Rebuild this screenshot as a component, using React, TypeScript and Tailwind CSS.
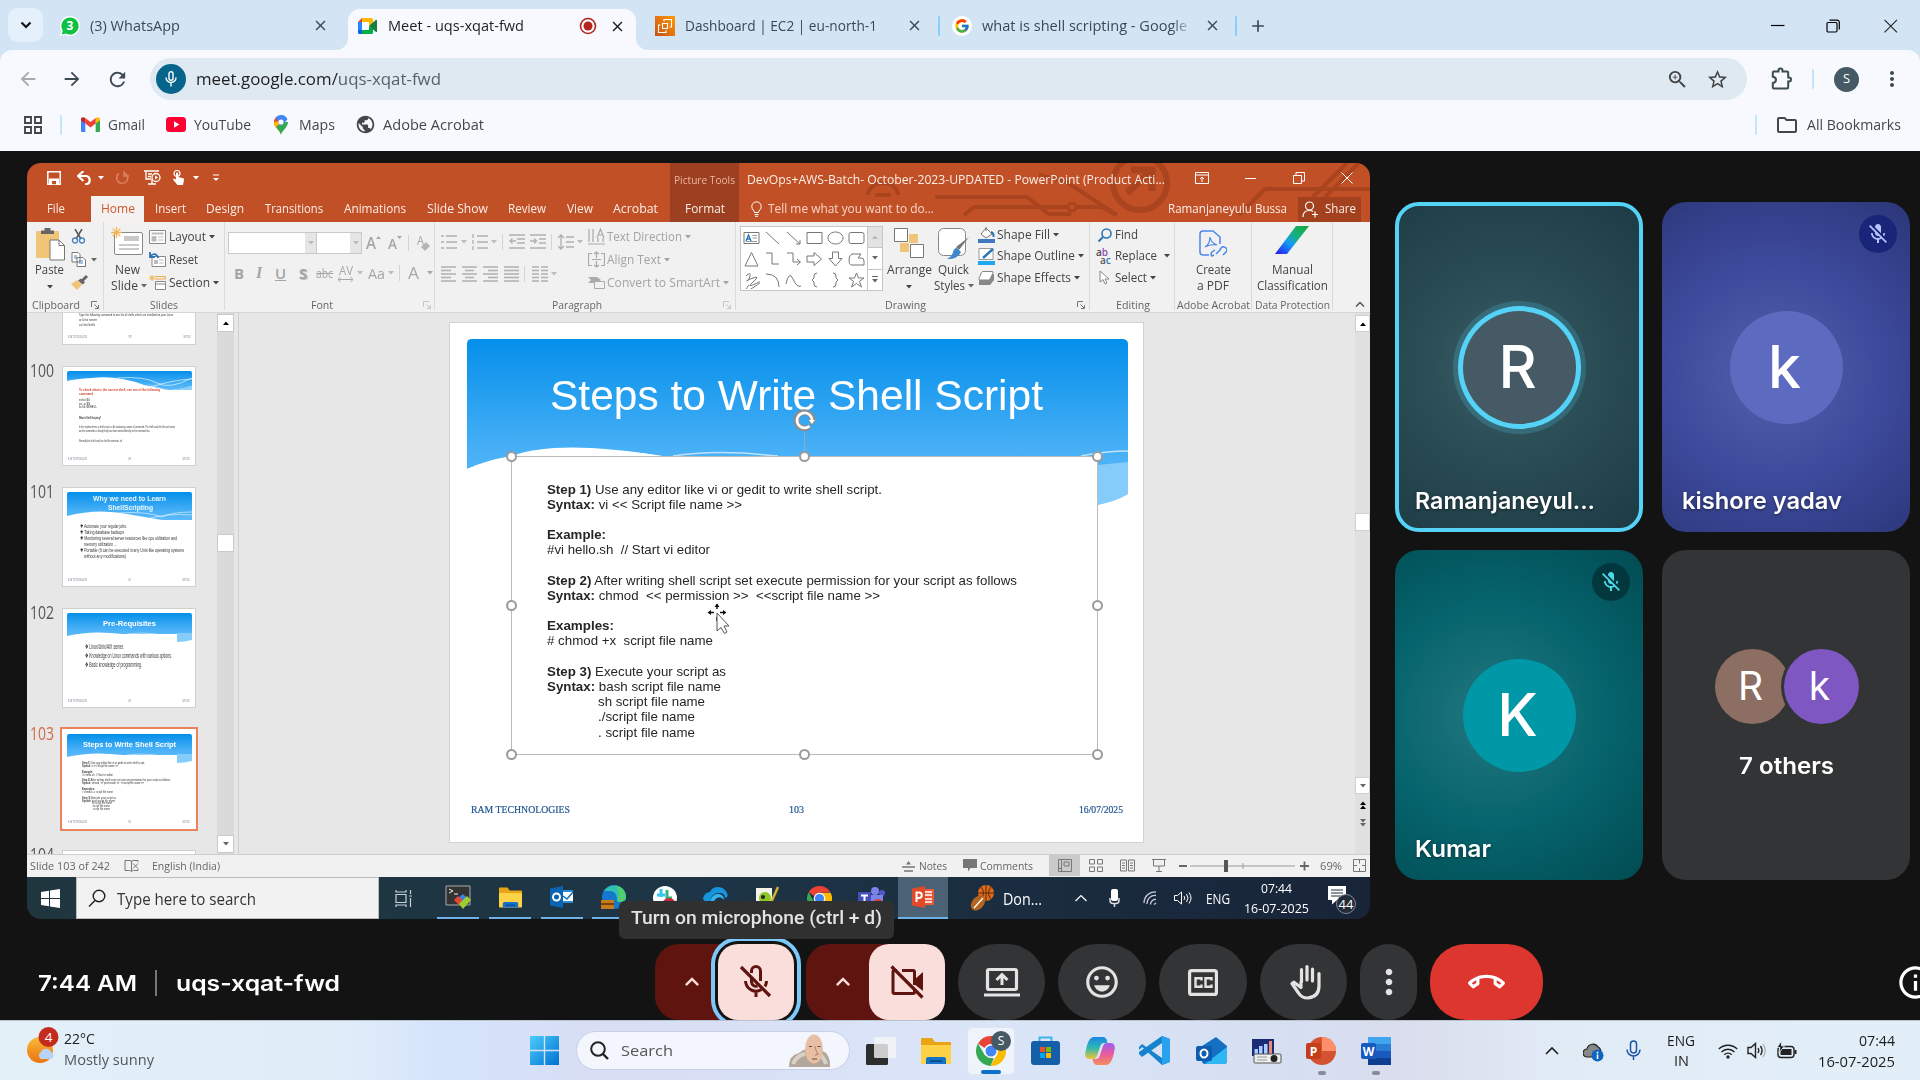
import React, { useLayoutEffect, useRef, useState } from "react";
import {
  MdAdd, MdArrowBack, MdArrowForward, MdClose, MdExpandLess, MdMicOff, MdMoreVert,
  MdOutlineCallEnd, MdOutlineClosedCaption, MdOutlineEmojiEmotions, MdOutlineExtension, MdOutlineFolder,
  MdOutlineInfo, MdPublic, MdRefresh, MdStarOutline, MdZoomIn,
} from "react-icons/md";
import { FcGoogle } from "react-icons/fc";

type Kids = { children?: React.ReactNode; className?: string };

/* Text condensed or stretched horizontally to fill the width its class gives. */
function Fit({ className = "", children }: Kids) {
  const outer = useRef<HTMLSpanElement>(null);
  const inner = useRef<HTMLSpanElement>(null);
  const [k, setK] = useState(1);
  useLayoutEffect(() => {
    if (!outer.current || !inner.current) return;
    const w = inner.current.getBoundingClientRect().width;
    if (w > 0) setK((old) => (old * outer.current!.clientWidth) / w);
  }, []);
  return (
    <span ref={outer} className={`block shrink-0 whitespace-pre ${className}`}>
      <span ref={inner} className="inline-block origin-left whitespace-pre" style={{ transform: `scaleX(${k})` }}>
        {children}
      </span>
    </span>
  );
}

function Svg({ w, h, className = "", children }: Kids & { w: number; h: number }) {
  return (
    <svg width={w} height={h} viewBox={`0 0 ${w} ${h}`} fill="none" className={`block shrink-0 ${className}`}>
      {children}
    </svg>
  );
}

const Caret = ({ className = "text-[#666]" }: Kids) => (
  <Svg w={6} h={4} className={className}><path d="M0 0h6L3 3.5z" fill="currentColor" /></Svg>
);

/* ---------- Browser ---------- */

const WhatsAppIcon = () => (
  <Svg w={20} h={20}>
    <path d="M10 0a10 10 0 1 1-4.6 18.9L0 20l1.2-5.2A10 10 0 0 1 10 0z" fill="#fff" />
    <path d="M10 1.4a8.6 8.6 0 1 1-4.2 16.1l-4 1 1-3.8A8.6 8.6 0 0 1 10 1.4z" fill="#0dc143" />
    <text x="10" y="14.4" fontSize="12" fontWeight="700" fill="#fff" textAnchor="middle" fontFamily="Open Sans">3</text>
  </Svg>
);
const MeetIcon = () => (
  <Svg w={19} h={16}>
    <path d="M0 4l4-4v4z" fill="#ea4335" /><path d="M0 4h4v8H0z" fill="#2684fc" /><path d="M0 12h4v4H1.5A1.5 1.5 0 0 1 0 14.500z" fill="#0066da" />
    <path d="M4 0h9.500A1.500 1.500 0 0 1 15 1.500V6l-4 2V4H4z" fill="#ffba00" /><path d="M4 12h7V8l4 3v3.500a1.500 1.500 0 0 1-1.500 1.500H4z" fill="#00ac47" />
    <path d="M11 8l7-6.200c.5-.3 1 0 1 .5v11.200c0 .6-.6.8-1 .5z" fill="#188038" />
  </Svg>
);
const Ec2Icon = () => (
  <Svg w={20} h={20}>
    <defs><linearGradient id="ec2" x1="0" y1="1" x2="1" y2="0"><stop stopColor="#c8511b" /><stop offset="1" stopColor="#f90" /></linearGradient></defs>
    <path d="M0 0h20v20H0z" fill="url(#ec2)" />
    <path d="M7.500 7.500h5v5h-5zM9 5.500V3.500h7.500v7.500h-2M5.500 9h-2v7.500h7.500v-2" stroke="#fff" strokeWidth="1.100" />
  </Svg>
);
const GmailIcon = () => (
  <Svg w={19} h={15}>
    <path d="M0 2v12a1 1 0 0 0 1 1h3.300V6z" fill="#4285f4" /><path d="M19 2v12a1 1 0 0 1-1 1h-3.300V6z" fill="#34a853" />
    <path d="M0 2.500C0 .4 2.200-.5 3.800.7L4.300 1v5.500L0 3.500z" fill="#c5221f" /><path d="M19 2.500c0-2.100-2.200-3-3.800-1.800l-.5.3v5.500l4.300-3z" fill="#fbbc04" />
    <path d="M4.300 1l5.200 4 5.200-4v5.500l-5.200 4-5.200-4z" fill="#ea4335" />
  </Svg>
);
const YtIcon = () => (<Svg w={20} h={15}><rect width="20" height="15" rx="3.500" fill="#ff0033" /><path d="M8 4.300v6.400l5.400-3.200z" fill="#fff" /></Svg>);
const MapsIcon = () => (
  <Svg w={14} h={20}>
    <path d="M7 20C6.500 16 0 12.500 0 7h7z" fill="#fbbc04" /><path d="M7 20c.5-4 7-7.500 7-13H6L2 12.200C4.500 15 6.500 17 7 20z" fill="#34a853" />
    <path d="M0 7a7 7 0 0 1 1.700-4.600L7 7l-5 5.500C.8 10.800 0 9 0 7z" fill="#ea4335" /><path d="M1.700 2.400A7 7 0 0 1 13.500 4.500L7 11z" fill="#4285f4" />
    <path d="M0 7.500L3 6l2 3-3.200 3.500C.6 10.800 0 9.300 0 7.500z" fill="#fbbc04" /><circle cx="7" cy="7" r="2.600" fill="#fff" />
  </Svg>
);

const Sep = ({ className = "" }: Kids) => <span className={`block h-5 w-[2px] shrink-0 rounded ${className}`} />;

function TabStrip() {
  return (
    <div className="flex h-[50px] items-center bg-[#d3e5f4] pt-px text-[14.5px] text-[#3a4a54]">
      <div className="mb-px ml-2 flex h-[34px] w-[35px] items-center justify-center rounded-[10px] bg-[#e4f1fd] text-[#111]"><Svg w={12} h={8}><path d="M1.500 1.500L6 6l4.500-4.500" stroke="currentColor" strokeWidth="2.200" /></Svg></div>
      <div className="ml-[17px]"><WhatsAppIcon /></div>
      <Fit className="ml-[10px] w-[90px]">(3) WhatsApp</Fit>
      <MdClose size={17} className="ml-[132px]" />
      <div className="relative ml-[19px] mt-2 flex h-[41px] w-[288px] items-center rounded-t-[12px] bg-[#f7f9fe] pb-[7px] text-[#1f1f1f]">
        <Svg w={12} h={12} className="absolute -left-3 bottom-0"><path d="M12 0v12H0A12 12 0 0 0 12 0z" fill="#f7f9fe" /></Svg>
        <Svg w={12} h={12} className="absolute -right-3 bottom-0"><path d="M0 0v12h12A12 12 0 0 1 0 0z" fill="#f7f9fe" /></Svg>
        <div className="ml-[10px]"><MeetIcon /></div>
        <Fit className="ml-[11px] w-[136px]">Meet - uqs-xqat-fwd</Fit>
        <Svg w={18} h={18} className="ml-[55px]"><circle cx="9" cy="9" r="7.500" stroke="#b3261e" strokeWidth="1.600" /><circle cx="9" cy="9" r="4.500" fill="#b3261e" /></Svg>
        <MdClose size={17} className="ml-[12px]" />
      </div>
      <div className="ml-[19px]"><Ec2Icon /></div>
      <Fit className="ml-[10px] w-[192px]">Dashboard | EC2 | eu-north-1</Fit>
      <MdClose size={17} className="ml-[29px]" />
      <Sep className="ml-[15px] bg-[#8ccdff]" />
      <div className="ml-[12px] flex size-5 items-center justify-center rounded-full bg-white"><FcGoogle size={16} /></div>
      <div className="ml-[10px] w-[211px] overflow-hidden [mask-image:linear-gradient(to_right,black_90%,transparent)]"><Fit className="w-[217px]">what is shell scripting - Google S</Fit></div>
      <MdClose size={17} className="ml-[11px]" />
      <Sep className="ml-[14px] bg-[#8ccdff]" />
      <MdAdd size={20} className="ml-[11px]" />
      <Svg w={14} h={14} className="ml-[503px] text-black"><path d="M0 6.500h13.500" stroke="currentColor" strokeWidth="1.200" /></Svg>
      <Svg w={14} h={14} className="ml-[41px] text-black"><rect x="1" y="3.500" width="10" height="9.500" rx="1.200" stroke="currentColor" strokeWidth="1.200" /><path d="M3.500 1.100h7.500a2.300 2.300 0 0 1 2.300 2.300v7" stroke="currentColor" strokeWidth="1.200" /></Svg>
      <Svg w={14} h={14} className="ml-[44px] text-[#222]"><path d="M.5 .8l12.500 12.500M13 .8L.5 13.300" stroke="currentColor" strokeWidth="1.100" /></Svg>
    </div>
  );
}

function Toolbar() {
  return (
    <div className="bg-[#d3e5f4]">
      <div className="flex h-[50px] items-center rounded-t-[12px] bg-[#f7f9fe] pt-2 text-[#3c4a52]">
        <MdArrowBack size={22} className="ml-[17px] text-[#a6abb0]" />
        <MdArrowForward size={22} className="ml-[22px]" />
        <MdRefresh size={23} className="ml-[23px]" />
        <div className="ml-[21px] flex h-[42px] w-[1597px] items-center rounded-full bg-[#dfe9f2]">
          <div className="ml-[6px] flex size-[30px] items-center justify-center rounded-full bg-[#07658c]">
            <Svg w={12} h={16}><rect x="4" y=".8" width="4" height="8.500" rx="2" stroke="#fff" strokeWidth="1.400" /><path d="M1 6.500a5 5 0 0 0 10 0M6 11.500V15.500" stroke="#fff" strokeWidth="1.400" /></Svg>
          </div>
          <Fit className="ml-[10px] w-[245px] text-[17px] text-[#1d1f20]">meet.google.com/<span className="text-[#56616a]">uqs-xqat-fwd</span></Fit>
          <MdZoomIn size={23} className="ml-[1225px] text-[#444]" />
          <MdStarOutline size={23} className="ml-[17px] text-[#444]" />
        </div>
        <Svg w={23} h={26} className="ml-[23px]"><path d="M3 5.500h5.500V4.500a2 2 0 0 1 4 0v1H17q1.200 0 1.200 1.200V11.500h.8a2 2 0 0 1 0 4h-.8v5.800q0 1.200-1.200 1.200H4q-1.200 0-1.200-1.200V17q3.200-.5 3.200-3.200T2.800 10.700V6.700q0-1.200 1.200-1.200" stroke="currentColor" strokeWidth="2" /></Svg>
        <Sep className="ml-[19px] bg-[#c3e4fd]" />
        <div className="ml-[20px] flex size-[25px] items-center justify-center rounded-full bg-[#455a64] text-[13px] text-white">S</div>
        <MdMoreVert size={24} className="ml-[21px]" />
      </div>
      <div className="flex h-[51px] items-center bg-[#f7f9fe] pb-[2px] text-[14.5px] text-[#43474b]">
        <Svg w={18} h={18} className="ml-[24px]"><path d="M1 1h6v6H1zM11 1h6v6h-6zM1 11h6v6H1zM11 11h6v6h-6z" stroke="#43474b" strokeWidth="1.900" /></Svg>
        <Sep className="ml-[18px] bg-[#c3e4fd]" />
        <div className="ml-[19px]"><GmailIcon /></div><Fit className="ml-2 w-[37px]">Gmail</Fit>
        <div className="ml-[21px]"><YtIcon /></div><Fit className="ml-2 w-[57px]">YouTube</Fit>
        <div className="ml-[23px]"><MapsIcon /></div><Fit className="ml-[11px] w-[36px]">Maps</Fit>
        <MdPublic size={21} className="ml-[20px]" /><Fit className="ml-[7px] w-[101px]">Adobe Acrobat</Fit>
        <Sep className="ml-[1271px] bg-[#c3e4fd]" />
        <MdOutlineFolder size={24} className="ml-[18px]" /><Fit className="ml-2 w-[94px]">All Bookmarks</Fit>
      </div>
    </div>
  );
}

/* ---------- PowerPoint title bar ---------- */

function PptTitle() {
  return (
    <div className="flex h-[59px] shrink-0 bg-[#c25026] text-[12px] text-[#fbeee8]">
      <div className="flex w-[643px] flex-col">
        <div className="flex h-[33px] items-center pb-1">
          <Svg w={14} h={14} className="ml-[20px]"><path d="M.8.8h12.400v12.400H.8z" stroke="#fff" strokeWidth="1.500" /><path d="M2 7.500h10V13H2z" fill="#fff" /><path d="M5 10h4v3.200H5z" fill="#c25026" /></Svg>
          <Svg w={16} h={14} className="ml-[16px]"><path d="M1 5h8.500a4.300 4.300 0 0 1 0 8.300H8" stroke="#fff" strokeWidth="2.200" /><path d="M6.500 0L1 5l5.500 5" stroke="#fff" strokeWidth="2.200" /></Svg>
          <Caret className="ml-[5px] text-white" />
          <Svg w={15} h={14} className="ml-[11px]"><path d="M9.500 2A5.500 5.500 0 1 1 4 2.500M9 0v5h5" stroke="#d8825f" strokeWidth="1.600" /></Svg>
          <Svg w={17} h={15} className="ml-[14px]"><path d="M0 1h15M2 1v8h5M4 4h4M4 6.500h3M8 9v5M4 14h8" stroke="#fff" strokeWidth="1.300" /><circle cx="12" cy="7.500" r="4" stroke="#fff" strokeWidth="1.300" fill="#c25026" /><path d="M11 5.500v4l3-2z" fill="#fff" /></Svg>
          <Svg w={13} h={15} className="ml-[11px]"><circle cx="5" cy="3.500" r="3" stroke="#fff" strokeWidth="1.200" /><path d="M4 3.500a1 1 0 0 1 2.200 0V7l5 1.200c.8.300 1 1 .8 1.800L11 15H5.500L1 9.500l1-1 2 1z" fill="#fff" /></Svg>
          <Caret className="ml-[8px] text-white" />
          <Svg w={6} h={8} className="ml-[14px]"><path d="M0 1h6" stroke="#fff" /><path d="M0 4h6L3 7z" fill="#fff" /></Svg>
        </div>
        <div className="flex h-[26px] items-center">
          <Fit className="ml-[20px] w-[18px]">File</Fit>
          <div className="ml-[26px] flex h-[26px] w-[53px] items-center justify-center bg-[#f4f2f1] text-[#d0562c]"><Fit className="w-[34px]">Home</Fit></div>
          <Fit className="ml-[11px] w-[31px]">Insert</Fit>
          <Fit className="ml-[20px] w-[38px]">Design</Fit>
          <Fit className="ml-[21px] w-[58px]">Transitions</Fit>
          <Fit className="ml-[21px] w-[62px]">Animations</Fit>
          <Fit className="ml-[21px] w-[61px]">Slide Show</Fit>
          <Fit className="ml-[20px] w-[38px]">Review</Fit>
          <Fit className="ml-[21px] w-[26px]">View</Fit>
          <Fit className="ml-[20px] w-[45px]">Acrobat</Fit>
        </div>
      </div>
      <div className="flex w-[69px] flex-col bg-[#9c4021]">
        <div className="flex h-[33px] items-center justify-center text-[11.5px] text-[#eeb49c]"><Fit className="w-[61px]">Picture Tools</Fit></div>
        <div className="flex h-[26px] items-center justify-center"><Fit className="w-[40px]">Format</Fit></div>
      </div>
      <div className="relative flex flex-1 flex-col">
        <svg className="absolute inset-0" width="631" height="59" fill="none" stroke="#a9441f" strokeWidth="4">
          <circle cx="401" cy="20" r="27" strokeWidth="6" /><path d="M388 30l24-22M392 7h21v21" strokeWidth="7" />
          <path d="M196 34h92l22 17h22M225 52l10-8h95M338 44h25l14 8M300 12l26 6 52 34" /><circle cx="333" cy="44" r="4" strokeWidth="3" />
          <path d="M129 32a15 12 0 0 1 30 0M136 32h16" /><path d="M500 52l26-26h105M574 34l34-34M586 34l34-34" />
        </svg>
        <div className="relative flex h-[33px] items-center">
          <Fit className="ml-[8px] w-[418px]">DevOps+AWS-Batch- October-2023-UPDATED - PowerPoint (Product Acti...</Fit>
          <Svg w={14} h={12} className="mb-1 ml-[30px]"><path d="M.5.500h13v11H.5zM.5 3h13M7 10V5M5 7l2-2 2 2" stroke="#fff" /></Svg>
          <Svg w={11} h={12} className="mb-1 ml-[36px]"><path d="M0 6.500h11" stroke="#fff" /></Svg>
          <Svg w={12} h={12} className="mb-1 ml-[37px]"><path d="M.5 3.500h8v8h-8zM3 3V.500h8.500V9H9" stroke="#fff" /></Svg>
          <Svg w={12} h={12} className="mb-1 ml-[36px]"><path d="M.5.500l11 11M11.500.500l-11 11" stroke="#fff" /></Svg>
        </div>
        <div className="relative flex h-[26px] items-center">
          <Svg w={11} h={16} className="ml-[12px]"><path d="M3.500 11.500c0-2-2.700-2.800-2.700-6a4.700 4.700 0 0 1 9.400 0c0 3.200-2.700 4-2.700 6zM3.500 13.500h4M4 15.300h3" stroke="#fff" /></Svg>
          <Fit className="ml-[6px] w-[166px] text-[#f8d5c6]">Tell me what you want to do...</Fit>
          <Fit className="ml-[234px] w-[119px]">Ramanjaneyulu Bussa</Fit>
          <div className="ml-[11px] flex h-[25px] w-[63px] items-center bg-[#a3411f]">
            <Svg w={17} h={17} className="ml-1"><circle cx="7.500" cy="5" r="4" stroke="#fff" strokeWidth="1.200" /><path d="M1 16c0-4 2.500-6.500 6.500-6.500 1.500 0 2.500.3 3.500 1M13 10.500v6M10 13.500h6" stroke="#fff" strokeWidth="1.200" /></Svg>
            <Fit className="ml-[6px] w-[31px]">Share</Fit>
          </div>
        </div>
      </div>
    </div>
  );
}

/* ---------- Ribbon ---------- */

const Launcher = ({ faint = false }: { faint?: boolean }) => (
  <Svg w={8} h={8} className={faint ? "text-[#c4c4c4]" : "text-[#777]"}><path d="M.5 6V.500H6M3.500 3.500L7 7M7.500 4v3.500H4" stroke="currentColor" /></Svg>
);
function Group({ className = "", labelRow, children }: Kids & { labelRow?: React.ReactNode }) {
  return (
    <div className={`flex h-[88px] shrink-0 flex-col border-r border-[#dadada] ${className}`}>
      <div className="flex h-[75px] shrink-0">{children}</div>
      <div className="flex h-4 shrink-0 items-center text-[11.5px] text-[#666]">{labelRow}</div>
    </div>
  );
}
const VSep = ({ className = "" }: Kids) => <span className={`block h-4 w-px bg-[#d4d4d4] ${className}`} />;

const shapePaths = [
  "M1 3.500h15v11H1z", "M2 3l13 12", "M2 3l13 12M15 11v4h-4", "M1 3.500h15v11H1z", "M8.500 3a7.500 6 0 1 0 .01 0z", "M3 3.500h11q2 0 2 2v7q0 2-2 2H3q-2 0-2-2v-7q0-2 2-2z",
  "M8.500 2.500L15 16H2z", "M2 3h6v11h7", "M2 3h6v9h7M12 9l3.500 3-3.500 3", "M1 6h7V2.500L15.500 9 8 15.500V12H1z", "M5.500 2h6v6.500H15L8.500 16 2 8.500h3.500z", "M4 4h9l-3 4h3q3 0 3 3v4H4q-3 0-3-5t3-6z",
  "M3 5q5-5 4 0t-3 5 6-3 0 4 4 1-3 4-5-2", "M2 3q13 0 13 13", "M1 13Q4-1 8 8t8 7", "M11 2q-3 0-3 3v2l-2 2 2 2v2q0 3 3 3", "M6 2q3 0 3 3v2l2 2-2 2v2q0 3-3 3", "M8.500 2l2 5h5.500l-4.500 3.300 2 5.700-5-3.500-5 3.500 2-5.700L1 7h5.500z",
];

const Lines = ({ d }: { d: string }) => <Svg w={16} h={16}><path d={d} stroke="#b0b0b0" strokeWidth="1.300" /></Svg>;

function LabelRow({ icon, children, className = "", caret = true }: Kids & { icon: React.ReactNode; caret?: boolean }) {
  return (
    <div className={`flex items-center ${className}`}>
      <span className="flex w-[17px] shrink-0 justify-center">{icon}</span>{children}{caret && <Caret className="ml-[3px]" />}
    </div>
  );
}

function Ribbon() {
  return (
    <div className="flex h-[91px] shrink-0 border-b border-[#d5d5d5] bg-[#f1f1f1] text-[12px] leading-4 text-[#444]">
      <Group className="w-[77px]" labelRow={<><Fit className="ml-[5px] w-[48px]">Clipboard</Fit><span className="ml-[11px]"><Launcher /></span></>}>
        <div className="ml-[7px] flex w-[31px] flex-col items-center pt-[6px]">
          <Svg w={31} h={33}><rect x="2" y="3" width="23" height="27" rx="1" fill="#f0c578" /><path d="M7 6V2.500h3.500V0h6v2.500H20V6z" fill="#666" /><path d="M16 12h9l5.500 5.500V32H16z" fill="#fff" stroke="#777" /><path d="M25 12v5.500h5.500" stroke="#777" /></Svg>
          <Fit className="mt-px w-[29px]">Paste</Fit><Caret className="mt-[7px]" />
        </div>
        <div className="ml-[6px] flex flex-col gap-2 pt-[7px]">
          <Svg w={15} h={15}><path d="M4 0l6 10M11 0L5 10" stroke="#555" strokeWidth="1.500" /><circle cx="4" cy="11.500" r="2.500" stroke="#4a83c3" strokeWidth="1.300" /><circle cx="11" cy="11.500" r="2.500" stroke="#4a83c3" strokeWidth="1.300" /></Svg>
          <div className="flex items-center gap-[5px]"><Svg w={15} h={15}><path d="M1 .500h6l2 2V10H1zM6 5.500h6l2.500 2.500v6.500H6z" fill="#fff" stroke="#777" /><path d="M3 4h3M3 6h3M8 9h4M8 11h4" stroke="#4a83c3" /></Svg><Caret /></div>
          <Svg w={17} h={15}><path d="M0 9l6-4 5 5-5 5z" fill="#f0c578" /><path d="M7 5.500l3-2 4 4-2.500 2z" fill="#666" /><path d="M11 6l5-5" stroke="#666" strokeWidth="3" /></Svg>
        </div>
      </Group>
      <Group className="w-[121px]" labelRow={<Fit className="ml-[46px] w-[28px]">Slides</Fit>}>
        <div className="ml-[5px] flex w-[37px] flex-col items-center pt-[5px]">
          <Svg w={33} h={29}><rect x="3.500" y="5.500" width="28" height="22" rx="1.500" fill="#fff" stroke="#888" /><path d="M13 9h15v5H13z" fill="#c9c9c9" /><path d="M8 18h20M8 22h20" stroke="#bbb" strokeWidth="1.500" /><path d="M5.500 0v11M0 5.500h11M1.600 1.600l7.800 7.800M9.400 1.600L1.600 9.400" stroke="#f0b556" strokeWidth="1.300" /></Svg>
          <Fit className="mt-[6px] w-[25px]">New</Fit>
          <div className="flex items-center gap-[3px] pl-[2px]"><Fit className="w-[27px]">Slide</Fit><Caret /></div>
        </div>
        <div className="ml-[3px] flex flex-col pt-[3px]">
          <LabelRow className="h-[23px]" icon={<Svg w={17} h={14}><path d="M.5.500h16v13H.5z" fill="#fff" stroke="#888" /><path d="M2.500 2.500h12v2h-12zM2.500 6h5v5.500h-5z" fill="#bbb" /><path d="M9 7h5.500M9 10h5.500" stroke="#bbb" /></Svg>}><Fit className="ml-[3px] w-[37px]">Layout</Fit></LabelRow>
          <LabelRow className="h-[23px]" caret={false} icon={<Svg w={17} h={15}><path d="M3 4.500h13.500v10H3z" fill="#fff" stroke="#888" /><path d="M5 8h4v4H5z" fill="#bbb" /><path d="M10 8h4.500M10 11h4.500" stroke="#bbb" /><path d="M1 4.500Q6-1 9.500 6M1 0v5h5" stroke="#2e75b6" strokeWidth="1.800" /></Svg>}><Fit className="ml-[3px] w-[29px]">Reset</Fit></LabelRow>
          <LabelRow className="h-[23px]" icon={<Svg w={17} h={15}><path d="M6 1.500h10.500V4H6" stroke="#eda84b" /><path d="M6.500 6.500h10v8h-10z" fill="#fff" stroke="#888" /><path d="M6.500 9h10" stroke="#888" /><path d="M3 0v6M0 3h6M1 1l4 4M5 1L1 5" stroke="#f0b556" /></Svg>}><Fit className="ml-[3px] w-[41px]">Section</Fit></LabelRow>
        </div>
      </Group>
      <Group className="w-[210px]" labelRow={<><Fit className="ml-[86px] w-[22px]">Font</Fit><span className="ml-[90px]"><Launcher faint /></span></>}>
        <div className="flex flex-col pt-[10px] text-[#a6a6a6]">
          <div className="flex h-[22px] items-center">
            <div className="ml-[3px] flex h-[22px] w-[89px] items-center justify-end border border-[#c9c9c9] bg-white"><span className="flex h-full w-[11px] items-center justify-center bg-[#e6e6e6]"><Caret className="text-[#bbb]" /></span></div>
            <div className="flex h-[22px] w-[45px] items-center justify-end border border-l-0 border-[#c9c9c9] bg-white"><span className="flex h-full w-[11px] items-center justify-center bg-[#e6e6e6]"><Caret className="text-[#bbb]" /></span></div>
            <Fit className="ml-[4px] w-[10px] text-[16px] font-semibold">A</Fit><Svg w={5} h={14}><path d="M0 3h5L2.500 0z" fill="#a6a6a6" /></Svg>
            <Fit className="ml-[7px] w-[9px] pt-[2px] text-[14px] font-semibold">A</Fit><Svg w={5} h={14}><path d="M0 0h5L2.500 3z" fill="#a6a6a6" /></Svg>
            <VSep className="ml-[6px]" />
            <Fit className="-mt-1 ml-[8px] w-[7px] text-[12px]">A</Fit><Svg w={9} h={12} className="-ml-[3px] mt-1"><path d="M0 8l5-5 4 4-5 5z" fill="#b5b5b5" /></Svg>
          </div>
          <div className="mt-[8px] flex h-[22px] items-center text-[15px]">
            <b className="ml-[9px] w-[10px]">B</b>
            <i className="ml-[12px] w-[9px] font-['Liberation_Serif'] text-[16px] font-bold">I</i>
            <u className="ml-[10px] w-[12px] font-semibold">U</u>
            <b className="ml-[12px] w-[9px] [text-shadow:1px_1px_1px_#bbb]">S</b>
            <Fit className="ml-[8px] w-[17px] text-[13px]"><s>abc</s></Fit>
            <div className="ml-[5px] flex w-[15px] flex-col items-center"><Fit className="w-[14px] text-[12.500px] leading-[13px]">AV</Fit><Svg w={15} h={5}><path d="M0 2.500h15M2.500 0L0 2.500 2.500 5M12.500 0L15 2.500 12.500 5" stroke="#a6a6a6" /></Svg></div><Caret className="ml-[4px] text-[#bbb]" />
            <Fit className="ml-[5px] w-[17px]">Aa</Fit><Caret className="ml-[3px] text-[#bbb]" />
            <VSep className="ml-[5px]" />
            <Fit className="ml-[8px] w-[11px] text-[17px]">A</Fit><Caret className="ml-[8px]" />
          </div>
        </div>
      </Group>
      <Group className="w-[301px]" labelRow={<><Fit className="ml-[117px] w-[50px]">Paragraph</Fit><span className="ml-[121px]"><Launcher faint /></span></>}>
        <div className="flex w-[153px] flex-col pt-[12px]">
          <div className="flex h-4 items-center pl-[6px]">
            <Lines d="M0 2h3M5 2h11M0 8h3M5 8h11M0 14h3M5 14h11" /><Caret className="ml-[4px] text-[#bbb]" />
            <span className="ml-[5px]"><Lines d="M1 0v4M5 2h11M1 6v4M5 8h11M1 12v4M5 14h11" /></span><Caret className="ml-[3px] text-[#bbb]" />
            <VSep className="ml-[5px]" />
            <span className="ml-[6px]"><Lines d="M0 1h16M8 5h8M8 9h8M0 14h16M7 7H1M3.500 4.500L1 7l2.500 2.500" /></span>
            <span className="ml-[5px]"><Lines d="M0 1h16M9 5h7M9 9h7M0 14h16M0 7h6M4 4.500L6.500 7 4 9.500" /></span>
            <VSep className="ml-[5px]" />
            <span className="ml-[6px]"><Lines d="M3 1v14M0 4l3-3 3 3M0 12l3 3 3-3M8 3h8M8 8h8M8 13h8" /></span><Caret className="ml-[3px] text-[#bbb]" />
          </div>
          <div className="mt-[16px] flex h-4 items-center pl-[6px]">
            <Lines d="M0 1h15M0 4.500h10M0 8h15M0 11.500h10M0 15h15" />
            <span className="ml-[5px]"><Lines d="M0 1h15M3 4.500h9M0 8h15M3 11.500h9M0 15h15" /></span>
            <span className="ml-[5px]"><Lines d="M0 1h15M5 4.500h10M0 8h15M5 11.500h10M0 15h15" /></span>
            <span className="ml-[5px]"><Lines d="M0 1h15M0 4.500h15M0 8h15M0 11.500h15M0 15h15" /></span>
            <VSep className="ml-[4px]" />
            <span className="ml-[7px]"><Lines d="M0 1h7M9 1h7M0 4.500h7M9 4.500h7M0 8h7M9 8h7M0 11.500h7M9 11.500h7M0 15h7M9 15h7" /></span><Caret className="ml-[3px] text-[#bbb]" />
          </div>
        </div>
        <div className="flex flex-col pt-[3px] text-[#a3a3a3]">
          <LabelRow className="h-[23px]" icon={<Svg w={17} h={17}><path d="M1 1v13M5 1v13M10 10v4M15 10v4M0 16h17M9 10l3.500-9L16 10M10 7h5" stroke="#aaa" strokeWidth="1.200" /></Svg>}><Fit className="ml-[2px] w-[75px]">Text Direction</Fit></LabelRow>
          <LabelRow className="h-[23px]" icon={<Svg w={17} h={17}><path d="M4 2.500H.500v12H4M13 2.500h3.500v12H13M4 8.500h9M8.500 7V1M6 3l2.500-2L11 3M8.500 10v6M6 14l2.500 2 2.500-2" stroke="#aaa" strokeWidth="1.200" /></Svg>}><Fit className="ml-[2px] w-[54px]">Align Text</Fit></LabelRow>
          <LabelRow className="h-[23px]" icon={<Svg w={17} h={15}><path d="M0 2h9l4 3-4 3H0l3-3z" fill="#aaa" /><path d="M6.500 6.500h10v7h-10z" fill="#f1f1f1" stroke="#aaa" /></Svg>}><Fit className="ml-[2px] w-[113px]">Convert to SmartArt</Fit></LabelRow>
        </div>
      </Group>
      <Group className="w-[354px]" labelRow={<><Fit className="ml-[149px] w-[41px]">Drawing</Fit><span className="ml-[151px]"><Launcher /></span></>}>
        <div className="ml-[4px] mt-[4px] flex h-[65px] w-[143px] border border-[#c6c6c6] bg-white">
          <div className="grid flex-1 grid-cols-6 place-items-center">
            {shapePaths.map((d, i) => (
              <Svg key={i} w={17} h={18}><path d={d} stroke="#777" />{i === 0 && <path d="M3 12l2.500-6L8 12M4 10h3" stroke="#2e75b6" strokeWidth="1.400" />}{i === 0 && <path d="M9.500 6.500H14M9.500 9H14M3 12.500h11" stroke="#999" />}</Svg>
            ))}
          </div>
          <div className="flex w-[15px] flex-col border-l border-[#c6c6c6]">
            <span className="flex flex-1 items-center justify-center bg-[#e2e2e2]"><Caret className="rotate-180 text-[#bbb]" /></span>
            <span className="flex flex-1 items-center justify-center border-y border-[#c6c6c6]"><Caret /></span>
            <span className="flex flex-1 flex-col items-center justify-center gap-[2px]"><span className="h-px w-[6px] bg-[#666]" /><Caret /></span>
          </div>
        </div>
        <div className="ml-[3px] flex w-[46px] flex-col items-center pt-[6px]">
          <Svg w={30} h={31}><path d="M15 6h9v9h-9zM6 15h9v9H6z" fill="#f0c578" /><path d="M.5.500h13v13H.5zM16.500 16.500h13v13h-13z" fill="#fff" stroke="#777" /></Svg>
          <Fit className="mt-[3px] w-[45px]">Arrange</Fit><Caret className="mt-[7px]" />
        </div>
        <div className="ml-[2px] flex w-[39px] flex-col items-center pt-[6px]">
          <Svg w={33} h={33}><rect x="1.500" y=".5" width="27" height="27" rx="5" fill="#fff" stroke="#888" /><path d="M32 9L22 22l-3-3z" fill="#777" /><path d="M20 20l4 4q-4 8-14 7 5-2 6-7 1-4 4-4z" fill="#3f87cb" /></Svg>
          <Fit className="mt-px w-[31px]">Quick</Fit>
          <div className="flex items-center gap-[3px]"><Fit className="w-[31px]">Styles</Fit><Caret /></div>
        </div>
        <div className="ml-[5px] flex flex-col pt-[2px]">
          <LabelRow className="h-[21.5px]" icon={<Svg w={17} h={17}><path d="M8 2l6 6-6 4-5-4z" fill="#fff" stroke="#777" /><path d="M8 5V1" stroke="#777" /><path d="M13 6q3 1 2.500 5" stroke="#2e75b6" strokeWidth="2" /><path d="M0 13h17v4H0z" fill="#3f78c0" /></Svg>}><Fit className="ml-[2px] w-[53px]">Shape Fill</Fit></LabelRow>
          <LabelRow className="h-[21.5px]" icon={<Svg w={17} h={17}><path d="M1 .500h14v11H1z" stroke="#999" fill="#fff" /><path d="M5 10L15 1" stroke="#2e75b6" strokeWidth="2.500" /><path d="M0 13h17v4H0z" fill="#1fa8f0" /></Svg>}><Fit className="ml-[2px] w-[78px]">Shape Outline</Fit></LabelRow>
          <LabelRow className="h-[21.5px]" icon={<Svg w={17} h={14}><path d="M4 3h12v6l-4 5H1V9z" fill="#888" /><path d="M5 .500h9q1.500 0 1 1.500l-3 6q-.5 1-1.500 1H2q-1.500 0-1-1.500L3.500 1.500Q4 .500 5 .500z" fill="#fff" stroke="#888" /></Svg>}><Fit className="ml-[2px] w-[74px]">Shape Effects</Fit></LabelRow>
        </div>
      </Group>
      <Group className="w-[85px]" labelRow={<Fit className="ml-[26px] w-[34px]">Editing</Fit>}>
        <div className="ml-[6px] flex flex-col pt-[2px]">
          <LabelRow className="h-[21.5px]" caret={false} icon={<Svg w={14} h={14}><circle cx="8.500" cy="5.500" r="4.500" stroke="#2e75b6" strokeWidth="1.600" /><path d="M5 9l-4.500 4.500" stroke="#2e75b6" strokeWidth="2" /></Svg>}><Fit className="ml-[2px] w-[23px]">Find</Fit></LabelRow>
          <div className="flex h-[21.5px] items-center">
            <span className="flex w-[17px] flex-col text-[10px] font-semibold leading-[8px]"><span>a<span className="text-[#8e4fae]">b</span></span><span className="pl-[4px]"><span className="text-[#555]">a</span><span className="text-[#2e75b6]">c</span></span></span>
            <Fit className="ml-[2px] w-[42px]">Replace</Fit><Caret className="ml-[7px]" />
          </div>
          <LabelRow className="h-[21.5px]" icon={<Svg w={11} h={15}><path d="M1 1v11l3-2.500L6 14l2-1-2-4h4z" fill="#fff" stroke="#888" /></Svg>}><Fit className="ml-[2px] w-[32px]">Select</Fit></LabelRow>
        </div>
      </Group>
      <Group className="w-[77px]" labelRow={<Fit className="ml-[2px] w-[73px]">Adobe Acrobat</Fit>}>
        <div className="flex flex-1 flex-col items-center pt-[8px]">
          <Svg w={28} h={30}><path d="M10 25H4q-3 0-3-3V4q0-3 3-3h10l7 6v7" stroke="#4a86e8" strokeWidth="1.500" /><path d="M6 17q5-3 5-10M11 7q1 6 7 8M6 17q5-3 12-2" stroke="#4a86e8" strokeWidth="1.200" /><path d="M15 25l-2 1q-2-2 0-4l3-2M21 19l2-2q2-1 4 1t0 4l-3 3M17 24l5-5" stroke="#4a86e8" strokeWidth="1.500" /></Svg>
          <Fit className="mt-[2px] w-[35px]">Create</Fit><Fit className="w-[32px]">a PDF</Fit>
        </div>
      </Group>
      <Group className="w-[81px]" labelRow={<Fit className="ml-[3px] w-[75px]">Data Protection</Fit>}>
        <div className="flex flex-1 flex-col items-center pt-[4px]">
          <Svg w={34} h={28}><defs><linearGradient id="mc" x1="1" y1="0" x2="0" y2="1"><stop stopColor="#12a83a" /><stop offset=".35" stopColor="#17b07a" /><stop offset=".6" stopColor="#139cf5" /><stop offset="1" stopColor="#2a10f0" /></linearGradient></defs><path d="M21 0h13L12 28H0z" fill="url(#mc)" /></Svg>
          <Fit className="mt-[8px] w-[41px]">Manual</Fit><Fit className="w-[71px]">Classification</Fit>
        </div>
      </Group>
      <div className="flex flex-1 items-end justify-center pb-[4px] pl-4"><Svg w={10} h={7}><path d="M1 5.500l4-4 4 4" stroke="#555" strokeWidth="1.500" /></Svg></div>
    </div>
  );
}

/* ---------- Slide area ---------- */

const Blue = ({ id }: { id: string }) => (
  <linearGradient id={id} x1="0" y1="0" x2="0" y2="1"><stop stopColor="#048fea" /><stop offset=".68" stopColor="#48b0f6" /><stop offset="1" stopColor="#5cbaf8" /></linearGradient>
);

function ThumbHeader({ kind, n }: { kind: "low" | "mid" | "flat"; n: string }) {
  const fill = `url(#blue${n})`;
  return (
    <svg width="125" height="29" viewBox="0 0 125 29" fill="none" className="absolute left-[4px] top-[4px]">
      <defs><Blue id={`blue${n}`} /></defs>
      {kind === "low" && (
        <g><path d="M0 2q0-2 2-2h121q2 0 2 2v13q-12 4-23 4l-25-5Q50 4 25 7 8 8 0 10z" fill={fill} /><path d="M77 12q18 7 25 7t23-4v4H102z" fill="#8fd0fa" /><path d="M50 7q28-2 40 5t35-5M80 17q25-8 45-9" stroke="#fff" strokeOpacity=".6" /></g>
      )}
      {kind === "mid" && (
        <g><path d="M0 2q0-2 2-2h121q2 0 2 2v26H95L60 22Q30 16 0 24z" fill={fill} /><path d="M50 21q30-2 45 4 10-5 30-5M80 27q20-6 45-4" stroke="#fff" strokeOpacity=".55" /></g>
      )}
      {kind === "flat" && (
        <g><path d="M0 2q0-2 2-2h121q2 0 2 2v19H55Q25 17 0 23z" fill={fill} /><path d="M110 20h15v7q-8 2-15 2z" fill="#86ccfb" /><path d="M60 21q15-2 30 0" stroke="#fff" strokeOpacity=".5" /></g>
      )}
    </svg>
  );
}

function Thumb({ n, active = false, kind = "flat", children }: Kids & { n: string; active?: boolean; kind?: "low" | "mid" | "flat" }) {
  return (
    <div className="flex h-[121px] shrink-0">
      <Fit className={`ml-[3px] -mt-[9px] h-6 w-[24px] text-[18px] ${active ? "text-[#d26a47]" : "text-[#555]"}`}>{n}</Fit>
      <div className={`relative ml-[8px] h-[100px] w-[134px] border bg-white ${active ? "border-transparent ring-2 ring-[#e8835c]" : "border-[#cfcfcf]"}`}>
        <ThumbHeader kind={kind} n={n} />
        <div className="relative h-[89px] font-['Liberation_Sans'] text-[#333]">{children}</div>
        <div className="flex justify-between px-[5px] font-['Liberation_Serif'] text-[3px] leading-[6px] text-[#6f7c8c]"><Fit className="w-[19px]">RAM TECHNOLOGIES</Fit><Fit className="mr-[10px] w-[3px]">{n}</Fit><Fit className="w-[8px]">16/07/2025</Fit></div>
      </div>
    </div>
  );
}

const scriptLines: [string, string, string, string][] = [
  ["Step 1)", " Use any editor like vi or gedit to write shell script.", "w-[335px]", "w-[63px]"],
  ["Syntax:", " vi << Script file name >>", "w-[195px]", "w-[36px]"],
  ["", "", "", ""],
  ["Example:", "", "w-[59px]", "w-[11px]"],
  ["", "#vi hello.sh  // Start vi editor", "w-[163px]", "w-[31px]"],
  ["", "", "", ""],
  ["Step 2)", " After writing shell script set execute permission for your script as follows", "w-[470px]", "w-[88px]"],
  ["Syntax:", " chmod  << permission >>  <<script file name >>", "w-[333px]", "w-[62px]"],
  ["", "", "", ""],
  ["Examples:", "", "w-[67px]", "w-[13px]"],
  ["", "# chmod +x  script file name", "w-[166px]", "w-[31px]"],
  ["", "", "", ""],
  ["Step 3)", " Execute your script as", "w-[179px]", "w-[34px]"],
  ["Syntax:", " bash script file name", "w-[174px]", "w-[33px]"],
  ["", "sh script file name", "ml-[51px] w-[107px]", "ml-[10px] w-[20px]"],
  ["", "./script file name", "ml-[51px] w-[97px]", "ml-[10px] w-[18px]"],
  ["", ". script file name", "ml-[51px] w-[97px]", "ml-[10px] w-[18px]"],
];

function ThumbPane() {
  return (
    <div className="flex w-[212px] shrink-0 border-r border-[#cfcfcf]">
      <div className="flex h-full w-[190px] flex-col overflow-hidden">
        <div className="flex h-[53px] shrink-0">
          <div className="ml-[35px] h-[32px] w-[134px] border border-t-0 border-[#cfcfcf] bg-white pl-[16px] font-['Liberation_Sans'] text-[4px] leading-[5px] text-[#333]">
            <Fit className="-mt-[1px] w-[94px]">Type the following command to see list of shells which are installed on your Linux</Fit><Fit className="w-[18px]">or Unix server</Fit><Fit className="w-[16px]">cat /etc/shells</Fit>
            <div className="-ml-[11px] mr-[4px] mt-[8px] flex justify-between font-['Liberation_Serif'] text-[3px] text-[#6f7c8c]"><Fit className="w-[19px]">RAM TECHNOLOGIES</Fit><Fit className="mr-[10px] w-[3px]">99</Fit><Fit className="w-[8px]">16/07/2025</Fit></div>
          </div>
        </div>
        <Thumb n="100" kind="low">
          <div className="pl-[16px] pt-[21px] text-[4px] leading-[4px]">
            <div className="font-bold leading-[3.500px] text-[#d8402a]"><Fit className="w-[81px]">To check what is the current shell, use one of the following</Fit><Fit className="w-[14px]">command</Fit></div>
            <Fit className="mt-[3px] w-[11px] leading-[3.500px]">echo $0</Fit><Fit className="w-[11px] leading-[3.500px]">ps -p $$</Fit><Fit className="w-[18px] leading-[3.500px]">echo $SHELL</Fit>
            <Fit className="mt-[7px] w-[22px] font-bold">What is Shell Scripting?</Fit>
            <Fit className="mt-[5px] w-[96px]">In the simplest terms, a shell script is a file containing a series of commands. The shell reads the file and carries</Fit><Fit className="w-[71px]">out the commands as though they have been entered directly on the command line.</Fit>
            <Fit className="mt-[6px] w-[43px]">Normally the shell script has the file extension .sh</Fit>
          </div>
        </Thumb>
        <Thumb n="101" kind="mid">
          <div className="pt-[6px] text-[7.500px] leading-[9px] text-white"><Fit className="ml-[30px] w-[73px] font-bold opacity-90">Why we need to Learn</Fit><Fit className="ml-[45px] w-[45px] font-bold opacity-90">ShellScripting</Fit></div>
          <div className="pl-[17px] pt-[11px] text-[5.500px] leading-[6px]">
            <Fit className="w-[47px]">❖ Automate your regular jobs.</Fit><Fit className="w-[44px]">❖ Taking database backups</Fit><Fit className="w-[97px]">❖ Monitoring several server resources like cpu utilization and</Fit><Fit className="ml-[4px] w-[33px]">memory utilization ...</Fit><Fit className="w-[104px]">❖ Portable (It can be executed in any Unix-like operating systems</Fit><Fit className="ml-[4px] w-[42px]">without any modifications)</Fit>
          </div>
        </Thumb>
        <Thumb n="102">
          <Fit className="ml-[40px] w-[53px] pt-[9px] text-[8px] font-bold leading-[11px] text-white">Pre-Requisites</Fit>
          <div className="pl-[22px] pt-[13px] text-[6.500px] leading-[9px]"><Fit className="w-[39px]">❖ Linux/Unix/AIX server.</Fit><Fit className="w-[87px]">❖ Knowledge on Linux commands with various options.</Fit><Fit className="w-[57px]">❖ Basic knowledge of programming.</Fit></div>
        </Thumb>
        <Thumb n="103" active>
          <Fit className="ml-[20px] w-[93px] pt-[9px] text-[8px] font-bold leading-[11px] text-white">Steps to Write Shell Script</Fit>
          <div className="pl-[19px] pt-[12px] text-[3.500px]">
            {scriptLines.map(([b, t, , w], i) => (<div key={i} className="h-[2.900px] leading-[2.900px]">{w && <Fit className={w}><b>{b}</b>{t}</Fit>}</div>))}
          </div>
        </Thumb>
        <Thumb n="104" />
      </div>
      <div className="flex w-[17px] flex-col bg-[#dadada]">
        <span className="mt-px flex h-[18px] items-center justify-center border border-[#c9c9c9] bg-white"><Caret className="rotate-180" /></span>
        <span className="mt-[202px] h-[18px] border border-[#c9c9c9] bg-white" />
        <span className="mb-px mt-auto flex h-[18px] items-center justify-center border border-[#c9c9c9] bg-white"><Caret /></span>
      </div>
    </div>
  );
}

const Handle = ({ className = "" }: Kids) => <span className={`absolute size-[11px] rounded-full border-2 border-[#9b9b9b] bg-white ${className}`} />;

function Slide() {
  return (
    <div className="relative ml-[210px] mt-[9px] h-[521px] w-[695px] border border-[#d3d3d3] bg-white">
      <svg width="661" height="168" viewBox="0 0 661 168" fill="none" className="absolute left-[17px] top-[16px]">
        <defs><Blue id="blueMain" /></defs>
        <path d="M0 5q0-5 5-5h650q6 0 6 5v150q-14 8-30 10V117H195Q90 100 45 117 20 121 0 130z" fill="url(#blueMain)" />
        <path d="M661 123v32q-12 7-30 11v-40z" fill="#86ccfb" />
        <path d="M206 117q30-5 70-3l35 3M614 117q25-5 47-5" stroke="#bfe3fc" strokeWidth="1.500" />
        <path d="M0 130Q50 110 130 111q35 1 65 6H45v50H0z" fill="#fff" />
      </svg>
      <div className="relative flex h-[133px] items-center justify-center pt-[12px] font-['Liberation_Sans'] text-[43px] text-white"><Fit className="w-[493px]">Steps to Write Shell Script</Fit></div>
      <div className="relative ml-[61px] h-[299px] w-[587px] border border-[#b9b9b9] bg-white pl-[35px] pt-[24.500px] font-['Liberation_Sans'] text-[13.500px] leading-[15.200px] text-[#262626]">
        <span className="absolute left-[292px] top-[-25px] h-[25px] w-px bg-[#8fa9bd]" />
        <Svg w={24} h={24} className="absolute left-[281px] top-[-48px]"><path d="M16.500 17.500a8 8 0 1 1 3-6" stroke="#8d8d8d" strokeWidth="6" /><path d="M14.500 10h9.500l-5 7z" fill="#8d8d8d" /><path d="M16.500 17a7.500 7.500 0 1 1 2.500-5.500" stroke="#fff" strokeWidth="2.600" /><path d="M16 11h6l-3.200 4z" fill="#fff" /></Svg>
        <Handle className="-left-[6px] -top-[6px]" /><Handle className="-top-[6px] left-[287px]" /><Handle className="-right-[6px] -top-[6px]" />
        <Handle className="-left-[6px] top-[143px]" /><Handle className="-right-[6px] top-[143px]" />
        <Handle className="-bottom-[6px] -left-[6px]" /><Handle className="-bottom-[6px] left-[287px]" /><Handle className="-bottom-[6px] -right-[6px]" />
        {scriptLines.map(([b, t, w], i) => (<div key={i} className="h-[15.200px]">{w && <Fit className={w}><b>{b}</b>{t}</Fit>}</div>))}
        <Svg w={22} h={32} className="absolute left-[195px] top-[146px]"><path d="M10 1v5M10 14v4M2 9.500h5M13 9.500h5" stroke="#111" strokeWidth="1.500" /><path d="M7.500 4L10 .500 12.500 4zM4 7L.5 9.500 4 12zM16 7l3.500 2.500L16 12z" fill="#111" /><path d="M10 10v18l4-3.500 3.500 6 2.500-1.500-3-6h5z" fill="#fff" stroke="#555" /></Svg>
      </div>
      <div className="ml-[20.5px] mt-[47px] flex w-[652px] justify-between font-['Liberation_Serif'] text-[10.500px] text-[#1f548f] [-webkit-text-stroke:0.2px_#1f548f]"><Fit className="w-[99px]">RAM TECHNOLOGIES</Fit><Fit className="mr-[55px] w-[15px]">103</Fit><Fit className="w-[44px]">16/07/2025</Fit></div>
    </div>
  );
}

function MainScroll() {
  return (
    <div className="ml-auto flex w-[15px] flex-col items-center bg-[#e0e0e0]">
      <span className="mt-[2px] flex h-[17px] w-[15px] items-center justify-center border border-[#cfcfcf] bg-white"><Caret className="rotate-180" /></span>
      <span className="mt-[181px] h-[18px] w-[15px] border border-[#cfcfcf] bg-white" />
      <span className="mt-[246px] flex h-[17px] w-[15px] items-center justify-center border border-[#cfcfcf] bg-white"><Caret /></span>
      <span className="mt-[3px] flex h-[16px] flex-col justify-center"><Caret className="rotate-180" /><Caret className="rotate-180" /></span>
      <span className="mt-[2px] flex h-[16px] flex-col justify-center"><Caret /><Caret /></span>
    </div>
  );
}

function StatusBar() {
  return (
    <div className="flex h-[23px] shrink-0 items-center border-t border-[#cdcdcd] bg-[#f1f1f1] pb-px text-[11.5px] text-[#666]">
      <Fit className="ml-[3px] w-[80px]">Slide 103 of 242</Fit>
      <Svg w={15} h={13} className="ml-[14px]"><path d="M1 1.500h5q1.500 0 1.500 1.500v9.500q-1-1-2-1H1zM7.500 3q0-1.500 1.500-1.500h5V3M7.500 12.500q1-1 2-1H14V10M9 4.500l5 5M14 4.500l-5 5" stroke="#777" /></Svg>
      <Fit className="ml-[13px] w-[68px]">English (India)</Fit>
      <Svg w={13} h={12} className="ml-[682px]"><path d="M0 7h13M2 11h9" stroke="#777" strokeWidth="1.400" /><path d="M4 4.500h5L6.500 1z" fill="#777" /></Svg>
      <Fit className="ml-[4px] w-[28px]">Notes</Fit>
      <Svg w={14} h={13} className="ml-[16px]"><path d="M0 0h14v9H7.500l-2.500 3.500V9H0z" fill="#777" /></Svg>
      <Fit className="ml-[3px] w-[53px]">Comments</Fit>
      <span className="ml-[16px] flex h-full w-[31px] items-center justify-center bg-[#cacaca]"><Svg w={14} h={13}><path d="M.5.500h13v12H.5zM3.500.500v12M.5 9.500h3M6 3h5v4H6z" stroke="#777" /></Svg></span>
      <Svg w={14} h={13} className="ml-[9px]"><path d="M.5.500h5v4.500h-5zM8.500.500h5v4.500h-5zM.5 8h5v4.500h-5zM8.500 8h5v4.500h-5z" stroke="#777" /></Svg>
      <Svg w={15} h={13} className="ml-[17px]"><path d="M.5 1h6v11h-6zM8.500 1h6v11h-6zM2 4h3M2 6.500h3M2 9h3M10 4h3M10 6.500h3M10 9h3" stroke="#777" /></Svg>
      <Svg w={14} h={13} className="ml-[17px]"><path d="M0 .500h14M1.500.500v6.500h11V.500M7 7v5M4 12.500h6" stroke="#777" /></Svg>
      <Svg w={130} h={12} className="ml-[13px]"><path d="M0 6h8M121 6h9M125.500 1.500v9" stroke="#666" strokeWidth="1.800" /><path d="M11 6h105M64 3v6" stroke="#999" /><path d="M45 0h4v12h-4z" fill="#555" /></Svg>
      <Fit className="ml-[11px] w-[22px]">69%</Fit>
      <Svg w={13} h={13} className="ml-[11px]"><path d="M.5.500h12v12H.5zM6.500 1v3.500M6.500 9v3M1 6.500h3M9 6.500h3" stroke="#777" /></Svg>
    </div>
  );
}

/* ---------- App icons shared by both task bars ---------- */

const Chrome = ({ s }: { s: number }) => (
  <svg width={s} height={s} viewBox="0 0 30 30" className="block shrink-0">
    <path d="M28 7.500A15 15 0 0 1 14.500 30l6.500-11.500L15 8h13.200z" fill="#fbbc04" /><path d="M14.500 30A15 15 0 0 1 2 7.500l6.700 11.600 9 3.500z" fill="#34a853" /><path d="M28 7.500L15 8l-6.500 4L2 7.500A15 15 0 0 1 28 7.500z" fill="#ea4335" />
    <circle cx="15" cy="15" r="7" fill="#fff" /><circle cx="15" cy="15" r="5.500" fill="#4285f4" />
  </svg>
);
const Folder = ({ s }: { s: number }) => (
  <svg width={s} height={s} viewBox="0 0 30 28" className="block shrink-0"><path d="M0 2q0-1 1-1h10l3 4h15q1 0 1 1v20H0z" fill="#e8a317" /><path d="M0 8h30v18q0 1-1 1H1q-1 0-1-1z" fill="#fdd247" /><path d="M5 27v-5q0-2 2-2h16q2 0 2 2v5z" fill="#1572c9" /><path d="M9 23h12v2H9z" fill="#0b4f93" /></svg>
);

function Win10Bar() {
  return (
    <div className="flex h-[42px] shrink-0 items-stretch bg-gradient-to-r from-[#20363f] via-[#1d3546] to-[#182439] text-[14px] text-white">
      <span className="flex w-[49px] items-center pl-[14px]"><Svg w={19} h={19}><path d="M0 3l8-1.200V9H0zM9 1.600L19 0v9H9zM0 10h8v7.200L0 16zM9 10h10v9l-10-1.600z" fill="#fff" /></Svg></span>
      <div className="flex w-[303px] items-center border border-[#bbb] bg-[#f2f2f2] text-[16px] text-[#333]">
        <Svg w={18} h={18} className="ml-[11px]"><circle cx="11" cy="7" r="5.800" stroke="#222" strokeWidth="1.400" /><path d="M7 11.500L1 17.500" stroke="#222" strokeWidth="1.400" /></Svg>
        <Fit className="ml-[11px] w-[139px] pt-px">Type here to search</Fit>
      </div>
      <span className="ml-[15px] flex items-center"><Svg w={19} h={17}><path d="M2 4.500h10v8H2zM2 0v2h10V0M2 17v-2h10v2M16.500 0v4M16.500 8v9M15 6h3" stroke="#c9d0d3" strokeWidth="1.200" /></Svg></span>
      <span className="ml-[24px] flex w-[42px] items-center justify-center border-b-2 border-[#6fb0e6]"><Svg w={27} h={25}><path d="M1 1h24v19H1z" fill="#333" stroke="#aaa" /><path d="M4 4l4 2-4 2M9 9h4" stroke="#eee" /><path d="M13 13l5-4 5 5-5 4z" fill="#3f7fe0" /><path d="M9 15l4-4 6 6-4 4z" fill="#e34a33" /><path d="M14 19l8-8 4 4-8 9z" fill="#9ccf31" /></Svg></span>
      <span className="ml-[10px] flex w-[42px] items-center justify-center border-b-2 border-[#6fb0e6]"><Folder s={23} /></span>
      <span className="ml-[10px] flex w-[42px] items-center justify-center border-b-2 border-[#6fb0e6]"><Svg w={24} h={22}><path d="M10 4h13v13H10z" fill="#2a8ad4" /><path d="M12 6h11v9H12z" fill="#fff" /><path d="M13 10l4 3 6-7" stroke="#0f6fc0" strokeWidth="1.500" /><path d="M0 2.500L13 0v22L0 19.500z" fill="#0a64b4" /><circle cx="6.500" cy="11" r="3.500" stroke="#fff" strokeWidth="2" /></Svg></span>
      <span className="ml-[9px] flex w-[43px] items-center justify-center border-b-2 border-[#6fb0e6]"><Svg w={27} h={27}><circle cx="14" cy="13" r="12" fill="#1478cf" /><path d="M4 7A12 12 0 0 1 26 12q0 6-7 6-3-1-2-4-1-7-7-7-4 0-6 0z" fill="#2fc1b4" /><path d="M16 1.500A12 12 0 0 1 26 12q0 6-7 6-3-1-1-3 2-6-2-13.500z" fill="#52cf6b" /><path d="M1 16h13v9H1z" fill="#c77a1c" /><path d="M1 20h13" stroke="#7c4308" strokeWidth="2" /></Svg></span>
      <span className="ml-[17px] flex items-center"><Svg w={26} h={26}><circle cx="13" cy="13" r="12" fill="#fff" /><path d="M9 4v8M5 10h8" stroke="#36c5f0" strokeWidth="3" /><path d="M15 5v8h5" stroke="#2eb67d" strokeWidth="3" /><circle cx="17" cy="20" r="7" fill="#d2213c" /></Svg></span>
      <span className="ml-[25px] flex items-center"><Svg w={26} h={24}><path d="M0 12q2-6 7-6 2-5 8-5 6 0 9 6 2 4-2 5 0-5-6-5-8 0-9 9-7 0-7-4z" fill="#1795dc" /><path d="M7 16q2-9 9-8 5 1 5 6-3-4-7-2-4 2-3 8-3-1-4-4z" fill="#32b5f0" /></Svg></span>
      <span className="ml-[26px] flex items-center"><Svg w={24} h={24}><path d="M1 2h16v20H1z" fill="#f3f3e8" /><circle cx="10" cy="12" r="6" fill="#8ac926" /><circle cx="8" cy="11" r="2" fill="#222" /><path d="M23 1l-8 18" stroke="#d8b02a" strokeWidth="2.500" /></Svg></span>
      <span className="ml-[28px] flex items-center"><Chrome s={25} /></span>
      <span className="ml-[26px] flex items-center"><Svg w={27} h={24}><circle cx="17" cy="5" r="4" fill="#7b83eb" /><circle cx="24" cy="7" r="3" fill="#5059c9" /><path d="M9 9h16v13H9z" fill="#7b83eb" /><path d="M0 6h13v13H0z" fill="#464eb8" /><path d="M3 9.500h7M6.500 9.500v7" stroke="#fff" strokeWidth="2" /><circle cx="20" cy="19" r="6" fill="#e23b2e" /></Svg></span>
      <span className="ml-[13px] flex w-[50px] items-center justify-center border-b-2 border-[#6fb0e6] bg-[#4a6273]"><Svg w={23} h={22}><path d="M11 3h11v16H11z" fill="#e8593a" /><path d="M13 6h7M13 9h7M13 13h7M13 16h7" stroke="#fff" strokeWidth="1.300" /><path d="M0 2.500L13 0v22L0 19.500z" fill="#e04a28" /><path d="M4.500 16V6.500H7a2.800 2.800 0 0 1 0 5.600H4.500" stroke="#fff" strokeWidth="2" /></Svg></span>
      <span className="ml-[22px] flex items-center"><Svg w={24} h={26}><circle cx="16" cy="8" r="8" fill="#e06a1b" /><path d="M8 8h16M16 0v16M11 2q5 6 0 12M21 2q-5 6 0 12" stroke="#5c2a0c" /><ellipse cx="8" cy="18" rx="6" ry="8.500" transform="rotate(40 8 18)" fill="#b5641f" /><path d="M4 23l9-10" stroke="#fff" strokeWidth="1.300" /></Svg></span>
      <span className="ml-[9px] flex items-center pt-px text-[16px]"><Fit className="w-[39px]">Don...</Fit></span>
      <span className="ml-[33px] flex items-center"><Svg w={12} h={8}><path d="M.5 7L6 1.500 11.500 7" stroke="#fff" strokeWidth="1.200" /></Svg></span>
      <span className="ml-[22px] flex items-center"><Svg w={11} h={19}><rect x="2" y="0" width="7" height="12" rx="2" fill="#fff" /><path d="M1 9v2.500q0 3 3 3h3q3 0 3-3V9M5.500 14v4" stroke="#ddd" strokeWidth="1.500" /></Svg></span>
      <span className="ml-[23px] flex items-center"><Svg w={15} h={15}><path d="M1 12A11 11 0 0 1 13 1M4 13a8 8 0 0 1 9-8.500M7.500 13.500a5 5 0 0 1 5.500-5M11 13.500l2-1.500" stroke="#ccd" strokeWidth="1.300" /></Svg></span>
      <span className="ml-[16px] flex items-center"><Svg w={18} h={14}><path d="M.5 4.500h3L7.500 1v12l-4-3.500h-3zM10 5q1.500 2 0 4M12.500 3q3 4 0 8M15 1.500q4 5.500 0 11" stroke="#fff" /></Svg></span>
      <span className="ml-[14px] flex items-center"><Fit className="w-[24px]">ENG</Fit></span>
      <div className="ml-[14px] flex w-[65px] flex-col items-center justify-center gap-[3px] text-[13.500px] leading-[17px]"><Fit className="w-[31px]">07:44</Fit><Fit className="w-[65px]">16-07-2025</Fit></div>
      <span className="ml-[19px] flex items-center pt-1"><Svg w={29} h={30}><path d="M0 1h18v14H9l-5 4.500V15H0z" fill="#fff" /><path d="M3 5h12M3 8h12M3 11h12" stroke="#20303f" /><circle cx="18" cy="19" r="9.500" fill="#222b36" stroke="#889" /><text x="18" y="24" fontSize="13" fill="#fff" textAnchor="middle" fontFamily="Open Sans">44</text></Svg></span>
    </div>
  );
}

function SharedScreen() {
  return (
    <div className="ml-[27px] mt-[12px] flex h-[756px] w-[1343px] shrink-0 flex-col overflow-hidden rounded-[14px]">
      <PptTitle />
      <Ribbon />
      <div className="flex h-[541px] shrink-0 overflow-hidden bg-[#e7e7e7]"><ThumbPane /><Slide /><MainScroll /></div>
      <StatusBar />
      <Win10Bar />
    </div>
  );
}

/* ---------- Meet ---------- */

const meetFont = "font-['Inter'] font-semibold";

function Tile({ name, nameW, letter, tile, avatar, badge, speaking = false }: { name: string; nameW: string; letter: string; tile: string; avatar: string; badge?: string; speaking?: boolean }) {
  return (
    <div className={`relative flex flex-col items-center overflow-hidden rounded-[24px] ${tile} ${speaking ? "border-4 border-[#54d3f7]" : "border-4 border-transparent bg-origin-border"}`}>
      <div className={`mt-[105px] flex size-[113px] shrink-0 items-center justify-center rounded-full pb-px pr-[3px] font-['Inter'] text-[59px] font-medium text-white ${avatar}`}>{letter}</div>
      <div className="mt-auto w-full pb-[9px] pl-4 text-[23px] leading-[36px] text-white [text-shadow:0_1px_3px_rgba(0,0,0,.5)]"><Fit className={nameW}>{name}</Fit></div>
      {badge && <span className={`absolute right-[9px] top-[9px] flex size-[38px] items-center justify-center rounded-full ${badge}`}><MdMicOff size={24} /></span>}
    </div>
  );
}

function Tiles() {
  return (
    <div className={`ml-[25px] mt-[51px] grid h-[678px] w-[515px] grid-cols-2 grid-rows-2 gap-x-[19px] gap-y-[18px] ${meetFont}`}>
      <Tile name="Ramanjaneyul..." nameW="w-[180px]" letter="R" speaking tile="bg-[radial-gradient(circle_at_45%_50%,#41606a_0%,#2c4f58_35%,#1d3b45_100%)]" avatar="bg-[#455a64] shadow-[0_0_0_5px_#54d3f7,0_0_0_10px_rgba(84,211,247,.2)]" />
      <Tile name="kishore yadav" nameW="w-[160px]" letter="k" tile="bg-[radial-gradient(circle_at_45%_52%,#5260ab_0%,#3d4a9c_50%,#2b3678_100%)]" avatar="bg-[#5c6bc0]" badge="bg-[#182578] text-[#b9c4ff]" />
      <Tile name="Kumar" nameW="w-[76px]" letter="K" tile="bg-[radial-gradient(circle_at_40%_50%,#24777f_0%,#05646d_50%,#024b52_100%)]" avatar="bg-[#0097a7]" badge="bg-[#02373d] text-[#4fd8e8]" />
      <div className="flex flex-col items-center rounded-[24px] bg-[#333436] font-['Inter'] text-white">
        <div className="mt-[99px] flex pl-[2px] text-[39px] font-normal"><span className="flex size-[75px] items-center justify-center rounded-full bg-[#8d6e63] pr-1">R</span><span className="-ml-[6px] flex size-[75px] items-center justify-center rounded-full bg-[#7e57c2] pr-1 shadow-[0_0_0_3px_#333436]">k</span></div>
        <Fit className="mt-[25px] w-[95px] text-[23px] font-semibold">7 others</Fit>
      </div>
    </div>
  );
}

const round = "flex h-[76px] shrink-0 items-center justify-center rounded-full bg-[#333436] text-[#e3e3e3]";

function MeetBar() {
  return (
    <div className={`flex h-[101px] w-[1960px] items-start pt-[25px] text-white ${meetFont}`}>
      <div className="flex h-[76px] items-center pt-[2px] text-[22px]">
        <Fit className="ml-[38px] w-[99px]">7:44 AM</Fit><span className="ml-[18px] h-[26px] w-[2px] bg-[#777]" /><Fit className="ml-[19px] w-[164px]">uqs-xqat-fwd</Fit>
      </div>
      <div className="ml-[315px] flex h-[76px] w-[139px] shrink-0 items-center rounded-l-[24px] bg-[linear-gradient(to_right,#601410_110px,transparent_110px)]">
        <MdExpandLess size={28} className="ml-[23px] text-[#f9dedc]" />
        <span className="ml-[12px] flex h-[76px] w-[76px] items-center justify-center rounded-[20px] bg-[#f9dedc] text-[#601410] shadow-[0_0_0_3px_#131313,0_0_0_7px_#7cc8f8]">
          <Svg w={34} h={36}><path d="M12.500 9V7a4.500 4.500 0 0 1 9 0v10M12.500 13v5a4.500 4.500 0 0 0 6 4M6.500 17a10.500 10.500 0 0 0 16 8.500M27.500 17q0 3-1.500 5.500M17 27v6" stroke="currentColor" strokeWidth="3" /><path d="M2 3l29 29" stroke="currentColor" strokeWidth="3.200" /></Svg>
        </span>
      </div>
      <div className="ml-[12px] flex h-[76px] w-[139px] shrink-0 items-center rounded-l-[24px] bg-[linear-gradient(to_right,#601410_100px,transparent_100px)]">
        <MdExpandLess size={28} className="ml-[23px] text-[#f9dedc]" />
        <span className="ml-[12px] flex h-[76px] w-[76px] items-center justify-center rounded-[20px] bg-[#f9dedc] text-[#601410]">
          <Svg w={34} h={34}><path d="M7 5.500H4.500q-1.500 0-1.500 1.500v20q0 1.500 1.500 1.500H23q1.500 0 1.500-1.500v-3M12 5.500h11q1.500 0 1.500 1.500v13" stroke="currentColor" strokeWidth="3" /><path d="M24 15l9-8v19l-9-7z" fill="currentColor" /><path d="M1.500 1.500l31 31" stroke="currentColor" strokeWidth="3.200" /></Svg>
        </span>
      </div>
      <span className={`${round} ml-[13px] w-[87px]`}><Svg w={36} h={30}><rect x="3.500" y="2.500" width="29" height="20" rx="1.500" stroke="currentColor" strokeWidth="3.200" /><path d="M0 28h36" stroke="currentColor" strokeWidth="3.200" /><path d="M18 18V9M12.500 13L18 7.500l5.500 5.500" stroke="currentColor" strokeWidth="3" /></Svg></span>
      <span className={`${round} ml-[13px] w-[88px]`}><MdOutlineEmojiEmotions size={38} /></span>
      <span className={`${round} ml-[13px] w-[88px]`}><Svg w={30} h={27}><rect x="1.600" y="1.600" width="26.800" height="23.800" rx="2" stroke="currentColor" strokeWidth="3.200" /><path d="M13.500 11.500V9.300h-6v8.400h6v-2.200M23.500 11.500V9.300h-6v8.400h6v-2.200" stroke="currentColor" strokeWidth="2.400" /></Svg></span>
      <span className={`${round} ml-[13px] w-[87px]`}><Svg w={32} h={36} className="-mr-1"><path d="M11.500 18V5.500M17 16V2.500M22.500 17V5M29 9.500V22q0 11-11.500 12-6 0-9-5L2 19.500l2-1.300 7 5.300V18" stroke="currentColor" strokeWidth="3.200" strokeLinecap="round" strokeLinejoin="round" /></Svg></span>
      <span className={`${round} ml-[13px] w-[57px]`}><MdMoreVert size={40} /></span>
      <span className="ml-[13px] flex h-[76px] w-[113px] shrink-0 items-center justify-center rounded-[36px] bg-[#dc362e]"><MdOutlineCallEnd size={37} /></span>
      <MdOutlineInfo size={39} className="ml-[353px] mt-[19px] shrink-0" />
    </div>
  );
}

/* ---------- Windows 11 task bar ---------- */

function TaskBar() {
  return (
    <div className="flex h-[60px] items-center border-t border-[#b9c3cc] bg-[linear-gradient(to_right,#e3f0f8_0,#e0edf9_340px,#d5e4fb_440px,#d8def4_600px,#dbe5f8_1000px,#d6dff2_1300px,#dadded_1400px,#e1ebf6_1560px,#e2eff8_100%)] text-[14.5px] text-[#1d1d1d]">
      <Svg w={32} h={44} className="ml-[27px] mb-2"><defs><linearGradient id="sun" x1="0" y1="0" x2="0" y2="1"><stop stopColor="#f7b93a" /><stop offset="1" stopColor="#ec7410" /></linearGradient></defs><circle cx="13" cy="25" r="13" fill="url(#sun)" /><path d="M14 34a4 4 0 0 1 0-7 5.500 5.500 0 0 1 10 0 3.700 3.700 0 0 1 0 7z" fill="#b9d2f7" /><circle cx="21.500" cy="12" r="10" fill="#c42b1c" /><text x="21.500" y="17" fontSize="13.500" fill="#fff" textAnchor="middle" fontFamily="Open Sans">4</text></Svg>
      <div className="mb-[2px] ml-[5px] flex flex-col leading-[20.5px]"><Fit className="w-[31px]">22°C</Fit><Fit className="w-[90px] text-[#4f565c]">Mostly sunny</Fit></div>
      <Svg w={29} h={29} className="ml-[376px]"><defs><linearGradient id="win" x1="0" y1="0" x2="1" y2="1"><stop stopColor="#4ccdfb" /><stop offset="1" stopColor="#0070d2" /></linearGradient></defs><path d="M0 0h13.800v13.800H0zM15.200 0H29v13.800H15.200zM0 15.200h13.800V29H0zM15.200 15.200H29V29H15.200z" fill="url(#win)" /></Svg>
      <div className="ml-[17px] flex h-[39px] w-[274px] items-center rounded-full border border-[#c6cfe6] bg-[#f3f6fd]">
        <Svg w={19} h={19} className="ml-[13px]"><circle cx="8" cy="8" r="6.800" stroke="#222" strokeWidth="2" /><path d="M13 13l5 5" stroke="#222" strokeWidth="2.400" /></Svg>
        <Fit className="ml-[12px] w-[52px] text-[#555]">Search</Fit>
        <Svg w={44} h={33} className="ml-[115px]"><path d="M1 33q0-12 10-14 10-8 22-3 10 4 9 17z" fill="#b3a69a" /><path d="M5 30q4-9 12-10M38 30q-2-8-9-11" stroke="#d9d0c7" strokeWidth="4" /><ellipse cx="26" cy="15" rx="9" ry="14.500" fill="#e6bfa4" /><path d="M27 12q1 6 3 8l-3 1.500" stroke="#b98a70" strokeWidth="1.200" /><path d="M21 12.500h3M29.500 12.500h3M24 25h5" stroke="#6b4c3b" strokeWidth="1.200" /></Svg>
      </div>
      <Svg w={30} h={28} className="ml-[16px]"><rect y="7" width="22" height="21" rx="1.500" fill="#2d2d2d" /><rect x="8" y="0" width="22" height="21" rx="1.500" fill="#f5f5f5" fillOpacity=".8" /></Svg>
      <div className="ml-[25px]"><Folder s={30} /></div>
      <div className="relative ml-[16px] flex size-[48px] items-center justify-center rounded-[5px] border border-[#dfe5f2] bg-[#eff3fc]">
        <Chrome s={30} /><span className="absolute right-[3px] top-[3px] flex size-5 items-center justify-center rounded-full bg-[#455a64] text-[12px] text-white">S</span><span className="absolute bottom-0 h-1 w-5 rounded-full bg-[#0c70c8]" />
      </div>
      <Svg w={29} h={29} className="ml-[16px]"><path d="M8.500 7V1.500h12V7" stroke="#3cb6ea" strokeWidth="2" /><rect y="5" width="29" height="24" rx="3" fill="#155ea8" /><path d="M9 11h5v5H9z" fill="#f25022" /><path d="M15 11h5v5h-5z" fill="#7fba00" /><path d="M9 17h5v5H9z" fill="#00a4ef" /><path d="M15 17h5v5h-5z" fill="#ffb900" /></Svg>
      <Svg w={30} h={28} className="ml-[25px]">
        <defs>
          <linearGradient id="cpA" x1="0" y1="0" x2="0" y2="1"><stop stopColor="#1a86e8" /><stop offset=".5" stopColor="#2fb8b0" /><stop offset="1" stopColor="#f2c531" /></linearGradient>
          <linearGradient id="cpB" x1="0" y1="0" x2="0" y2="1"><stop stopColor="#9a5ff0" /><stop offset=".5" stopColor="#e85a9c" /><stop offset="1" stopColor="#f5905a" /></linearGradient>
        </defs>
        <path d="M9 0h9q3 0 4 4l.5 2H19q-3 0-4 4l-3 9q-1 3-4 3H5Q-1 22 .5 15 3 0 9 0z" fill="url(#cpA)" />
        <path d="M21 28h-9q-3 0-4-4l-.5-2H11q3 0 4-4l3-9q1-3 4-3h3q6 0 4.500 7Q27 28 21 28z" fill="url(#cpB)" />
      </Svg>
      <Svg w={31} h={29} className="ml-[24px]"><path d="M23 0l8 3v23l-8 3L3 11l-3 3v-3l3-3 20 14V7L3 21l-3-3v-2z" fill="#1683cf" /><path d="M23 0l8 3v23l-8 3z" fill="#29a1ef" /></Svg>
      <Svg w={31} h={27} className="ml-[26px]"><path d="M6 9L20 0l11 9v15q0 3-3 3H9q-3 0-3-3z" fill="#1470c4" /><path d="M31 10v14q0 3-3 3H9l22-17z" fill="#2fb7f3" /><rect y="9" width="16" height="15" rx="2" fill="#0e5bb0" /><ellipse cx="8" cy="16.500" rx="3.500" ry="4" stroke="#fff" strokeWidth="2" /></Svg>
      <Svg w={30} h={26} className="ml-[25px]"><path d="M0 1h22v17H0z" fill="#1a2a78" /><path d="M2.500 16v-5H6v5zM7 16V8h3.500v8zM12 16V6h3.500v10z" fill="#a9cdff" /><path d="M17 16V3h3v13z" fill="#f08a6a" /><rect x="2" y="16" width="27" height="9" rx="1" fill="#eee" stroke="#555" /><circle cx="22" cy="20.500" r="3.500" fill="#222" /><path d="M5 19h10M5 22h10" stroke="#999" /></Svg>
      <div className="relative ml-[24px]"><Svg w={30} h={28}><circle cx="16" cy="14" r="14" fill="#d35230" /><path d="M16 0a14 14 0 0 1 14 14H16z" fill="#ff8f6b" /><rect y="6" width="15" height="16" rx="2" fill="#c43e1c" /><text x="7.500" y="18.500" fontSize="12" fontWeight="700" fill="#fff" textAnchor="middle" fontFamily="Open Sans">P</text></Svg><span className="absolute -bottom-[10px] left-[12px] h-1 w-2 rounded-full bg-[#868c97]" /></div>
      <div className="relative ml-[25px]"><Svg w={30} h={28}><path d="M7 0h23v7H7z" fill="#41a5ee" /><path d="M7 7h23v7H7z" fill="#2b7cd3" /><path d="M7 14h23v7H7z" fill="#185abd" /><path d="M7 21h23v7H7z" fill="#103f91" /><rect y="6" width="15" height="16" rx="2" fill="#185abd" /><text x="7.500" y="18.500" fontSize="12" fontWeight="700" fill="#fff" textAnchor="middle" fontFamily="Open Sans">W</text></Svg><span className="absolute -bottom-[10px] left-[11px] h-1 w-2 rounded-full bg-[#868c97]" /></div>
      <Svg w={14} h={9} className="ml-[154px]"><path d="M1 8l6-6 6 6" stroke="#222" strokeWidth="1.600" /></Svg>
      <Svg w={21} h={20} className="ml-[24px] mt-1"><path d="M4 14a4 4 0 0 1 0-8 6 6 0 0 1 11-2q4 2 2 7l-6 3z" fill="#888" stroke="#222" strokeWidth="1.200" /><circle cx="14.500" cy="12.500" r="6" fill="#0c66c0" /><path d="M14.500 11.500v4.500M14.500 8.800v1.600" stroke="#fff" strokeWidth="1.600" /></Svg>
      <Svg w={15} h={21} className="ml-[22px]"><rect x="4.500" y="1" width="6" height="12" rx="3" stroke="#1a54a8" strokeWidth="1.500" /><path d="M1 9.500a6.500 6.500 0 0 0 13 0M7.500 16v4" stroke="#1a54a8" strokeWidth="1.500" /></Svg>
      <div className="ml-[26px] flex flex-col items-center leading-[20px]"><Fit className="w-[28px]">ENG</Fit><Fit className="w-[15px]">IN</Fit></div>
      <Svg w={20} h={16} className="ml-[23px]"><path d="M.800 6a13 13 0 0 1 18.400 0M3.500 9a9 9 0 0 1 13 0M6.300 11.700a5.200 5.200 0 0 1 7.400 0" stroke="#222" strokeWidth="1.400" /><circle cx="10" cy="14" r="1.700" fill="#222" /></Svg>
      <Svg w={20} h={17} className="ml-[9px]"><path d="M1 5.500h3L8.500 1.500v14L4 11.500H1zM11 6q1.500 2.500 0 5M13.500 4q3 4.500 0 9" stroke="#222" strokeWidth="1.400" /><path d="M16 2q4.500 6.500 0 13" stroke="#aaa" strokeWidth="1.200" /></Svg>
      <Svg w={21} h={19} className="ml-[10px]"><rect x="1" y="5.500" width="16" height="11" rx="3" stroke="#222" strokeWidth="1.400" /><rect x="3.500" y="8" width="11" height="6" fill="#222" /><path d="M18.500 9v4" stroke="#222" strokeWidth="2" /><path d="M4.500 0L0 6.500h3L2 12l5.500-7H4.500z" fill="#222" stroke="#e2eff8" strokeWidth=".8" /></Svg>
      <div className="ml-[20px] flex flex-col items-end leading-[21px]"><Fit className="w-[36px]">07:44</Fit><Fit className="w-[77px]">16-07-2025</Fit></div>
    </div>
  );
}

export default function App() {
  return (
    <div className="h-[1080px] w-[1920px] overflow-hidden bg-[#131313] font-['Open_Sans',sans-serif]">
      <TabStrip />
      <Toolbar />
      <div className="relative h-[869px] overflow-hidden bg-[#131313]">
        <div className="flex h-[768px]"><SharedScreen /><Tiles /></div>
        <MeetBar />
        <div className="absolute left-[619px] top-[750px] flex h-[38px] w-[275px] items-center justify-center rounded-[6px] bg-[#303030] pb-[2px] font-['Roboto'] text-[18.5px] font-medium text-[#e3e3e3]"><Fit className="w-[251px]">Turn on microphone (ctrl + d)</Fit></div>
      </div>
      <TaskBar />
    </div>
  );
}
